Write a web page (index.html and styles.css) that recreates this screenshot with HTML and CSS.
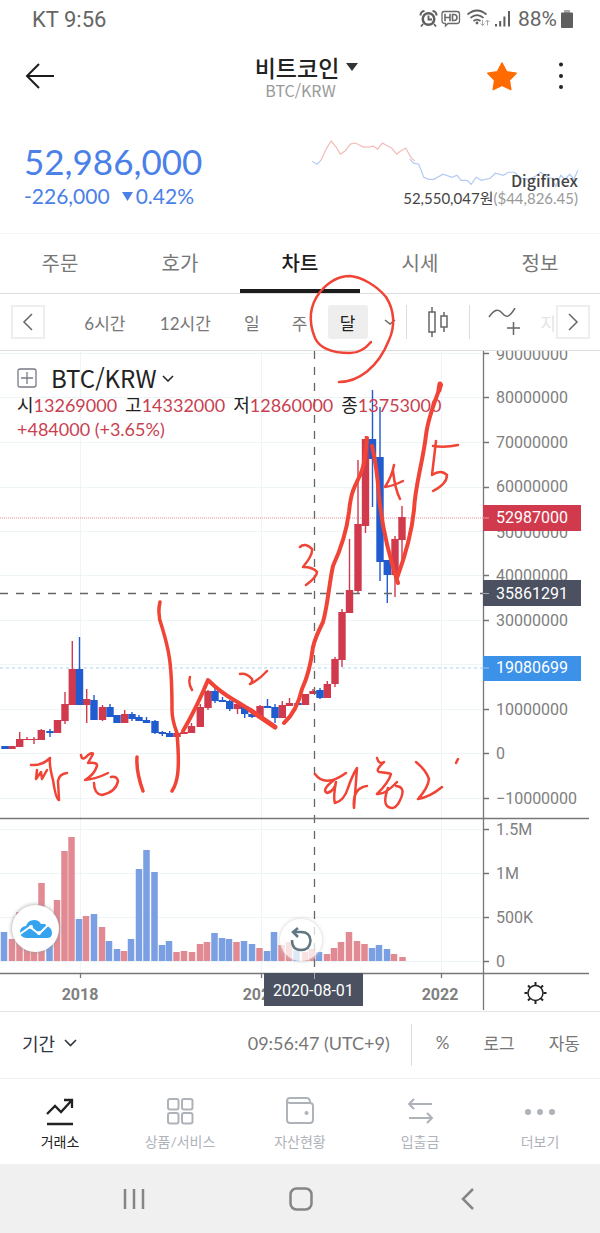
FILE: index.html
```html
<!DOCTYPE html>
<html lang="ko">
<head>
<meta charset="utf-8">
<meta name="viewport" content="width=device-width, initial-scale=1">
<title>비트코인 BTC/KRW</title>
<link rel="stylesheet" href="styles.css">
</head>
<body>
<div class="statusbar">
  <span>KT 9:56</span>
  <div class="status-icons">
    <svg width="96" height="22" viewBox="416 7 96 22" aria-hidden="true">
      <circle cx="426.500" cy="18" r="7" fill="#5f5f5f"/><circle cx="426.500" cy="18" r="4.500" fill="#fff"/>
      <path d="M426.500 14.500V18.500H430M421 23l-2 2.500M432 23l2 2.500" fill="none" stroke="#5f5f5f" stroke-width="1.800"/>
      <path d="M418.500 14.500q0-4 4-4.500M434.500 14.500q0-4-4-4.500" fill="none" stroke="#5f5f5f" stroke-width="2"/>
      <path d="M442 10.500h13q2.500 0 2.500 2.500v7q0 2.500-2.500 2.500h-9l-2.500 2.500v-2.500q-3.500 0-3.500-2.500v-7q0-2.500 2-2.500z" fill="none" stroke="#6a6a6a" stroke-width="1.300"/>
      <path d="M443 12.800v7.400M448 12.800v7.400M443 16.500h5M450.500 13.500v6h1.500q3 0 3-3t-3-3z" fill="none" stroke="#6a6a6a" stroke-width="1.600"/>
      <path d="M465.500 13.500q9.500-8 19 0M468.500 16.800q6.500-5.500 13 0M471.500 20q3.500-2.800 7 0" fill="none" stroke="#5f5f5f" stroke-width="1.700"/>
      <circle cx="475" cy="22" r="1.400" fill="#5f5f5f"/>
      <path d="M480.500 19v5.500m-2-2l2 2 2-2M485.500 24.500V19m-2 2l2-2 2 2" fill="none" stroke="#a5a5a5"/>
      <path d="M494 23v2.500M498.200 20v5.500M502.400 15.500v10M507 10v15.500" fill="none" stroke="#5f5f5f" stroke-width="2"/>
    </svg>
    <span>88%</span>
    <svg width="12" height="18" viewBox="0 0 12 18" aria-hidden="true"><path d="M3 0h6v3H3z" fill="#aaa"/><rect y="2.500" width="12" height="15.500" rx="1" fill="#5f5f5f"/></svg>
  </div>
</div>

<header class="header">
  <button class="icon-btn" aria-label="뒤로"><svg width="32" height="28" viewBox="0 0 32 28"><path d="M30 14H3M15 2L3 14l12 12" class="line dark"/></svg></button>
  <div class="title">
    <button class="pair">비트코인<svg width="12" height="8" viewBox="0 0 12 8"><path d="M0 0h12L6 8z" fill="#333"/></svg></button>
    <span class="pair-code">BTC/KRW</span>
  </div>
  <div class="actions">
    <button class="icon-btn" aria-label="즐겨찾기"><svg width="32" height="30" viewBox="0 0 32 30"><path d="M16 2l4.500 8.700 9.700 1.500-6.900 7 1.500 9.300L16 24.300l-8.800 4.200 1.500-9.300-6.900-7 9.700-1.500z" fill="#ff6b00" stroke="#ff6b00" stroke-width="1.500" stroke-linejoin="round"/></svg></button>
    <button class="icon-btn" aria-label="메뉴"><svg width="6" height="28" viewBox="0 0 6 28"><g fill="#222"><circle cx="3" cy="2.500" r="2"/><circle cx="3" cy="14" r="2"/><circle cx="3" cy="25" r="2"/></g></svg></button>
  </div>
</header>

<section class="summary">
  <div class="quote">
    <strong class="price">52,986,000</strong>
    <div class="change"><span>-226,000</span><span class="rate"><svg width="11" height="9" viewBox="0 0 11 9"><path d="M0 0h11L5.500 9z" fill="#4a80e8"/></svg>0.42%</span></div>
  </div>
  <div class="foreign">
    <svg class="spark" viewBox="315 139 264 50" aria-hidden="true">
      <path d="M324 160l5-11 5-8 5 6 4 7 5-3 5-7 5-1 4 2 4 2h5l5-1 4 3 5-6 5 3 4 2 5 6 4-3 5-3 5 9 4 4" fill="none" stroke="#f3bcb8" stroke-width="1.200"/>
      <path d="M315 161l5 3 4-4M412 159l4 4 5 1 5 13 5 2h5l9-5 9 3 5-2 4 5h6l4 4 5-7 5 3 9-2 5-5 8 2 5-3h6l6 6 8 1 7-3 5-4 7 5 4 1 4 8 5-11 4 4 5-5 4 5 4-9" fill="none" stroke="#b3cbf2" stroke-width="1.200"/>
    </svg>
    <span class="exchange">Digifinex</span>
    <span class="foreign-price">52,550,047원<small>($44,826.45)</small></span>
  </div>
</section>

<nav class="tabs">
  <a href="#order">주문</a><a href="#book">호가</a><a href="#chart" class="active" aria-current="page">차트</a><a href="#quotes">시세</a><a href="#info">정보</a>
</nav>

<div class="toolbar">
  <button class="scroll" aria-label="이전"><svg width="12" height="18" viewBox="0 0 12 18"><path d="M10 1L2 9l8 8" class="line"/></svg></button>
  <span></span>
  <button>6시간</button><button>12시간</button><button>일</button><button>주</button><button class="selected">달</button>
  <button aria-label="더 많은 간격"><svg width="12" height="6" viewBox="0 0 12 6"><path d="M1 1l5 4 5-4" class="line"/></svg></button>
  <i class="rule"></i>
  <button aria-label="캔들"><svg width="20" height="32" viewBox="0 0 20 32"><path d="M1 6h6v20H1zM4 1v5M4 26v5M13 10h6v11h-6zM16 6v4M16 21v5" class="line"/></svg></button>
  <i class="rule"></i>
  <button aria-label="지표 추가"><svg width="34" height="28" viewBox="0 0 34 28"><path d="M1 9c5-7 9-9 13-4s7 5 13-5M19 20h13M25.500 14v13" class="line"/></svg></button>
  <button class="faded">지</button>
  <button class="scroll" aria-label="다음"><svg width="12" height="18" viewBox="0 0 12 18"><path d="M2 1l8 8-8 8" class="line"/></svg></button>
</div>

<section class="chart" id="chart">
  <svg class="plot" viewBox="0 351 600 660" role="img" aria-label="BTC/KRW 월봉 차트">
    <path class="grid" d="M0 353.500H483M0 397.500H483M0 442.500H483M0 487.500H483M0 531.500H483M0 575.500H483M0 620.500H483M0 664.500H483M0 709.500H483M0 753.500H483M0 798.500H483M0 829.500H483M0 873.500H483M0 917.500H483M0 961.500H483M80.500 351V973M261.500 351V973M441.500 351V973"/>
    <path d="M0 668H483" stroke="#a7d3f5" stroke-dasharray="3 3"/>
    <path d="M0 518H483" stroke="#e58d96" stroke-dasharray="1 1"/>

    <g class="volume">
      <path class="up" d="M12 961V939M19.500 961V912M27 961V925M34 961V920M41.500 961V883M57 961V900M64.500 961V851M71.500 961V837M86 961V916M102 961V927M124 961V951M176.500 961V952M184 961V951M192 961V952M200 961V944M207 961V942M236.500 961V942M259.500 961V948M281.500 961V945M289 961V942M305 961V952M312 961V949M327 961V954M334 961V948M341 961V942M349 961V932M357 961V941M364.500 961V944M394 961V954M402.500 961V957"/>
      <path class="down" d="M4 961V932M49.500 961V930M79 961V919M94 961V914M109 961V941M117 961V949M131 961V939M139 961V869M146.500 961V850M154.500 961V872M162 961V945M169 961V941M214.500 961V933M222 961V938M229 961V939M244 961V941M252 961V944M267 961V951M274 961V932M296.500 961V951M319 961V952M372 961V948M379 961V945M387 961V949"/>
    </g>
    <g class="wick">
      <path class="up" d="M19.700 732V747M27 737V740M34 737V744M41.300 729V740M65 692V724M72.300 641V705M86.700 689V723M102.500 705V721M124.700 710V723M191.500 723V733M200.300 704V727M208 690V710M237.500 703V714M260 705V718M282.300 701V718M289.500 698V706M313 689V694M327.300 681V698M335 657V687M342 609V667M349.500 539V613M358 460V593M365.500 436V533M395 536V597M402 506V560"/>
      <path class="down" d="M50 729V737M79.500 637V705M94 695V720M110 704V717M132 712V721M139 715V721M146.500 717V723M155 720V734M162.300 731V736M169.700 731V737M215 688V703M222.500 697V702M229.700 700V711M244.700 705V718M252 712V718M267.500 699V708M275 704V723M298 701V705M320 688V699M372.500 390V507M380 407V581M387.300 560V603"/>
    </g>
    <g class="body">
      <path class="up" d="M12 746V749M19.700 739V747M27 739V740M34 739V740M41.300 730V740M57.500 720V733M65 704V721M72.300 669V705M86.700 699V705M102.500 707V720M124.700 714V723M177 733V737M184 732V734M191.500 726V733M200.300 707V727M208 691V708M237.500 704V709M260 706V717M282.300 705V718M289.500 703V706M305.500 694V705M313 691V694M327.300 684V698M335 659V684M342 612V660M349.500 590V613M358 524V591M365.500 439V526M395 539V575M402 517V540"/>
      <path class="down" d="M5 746V749M50 731V733M79.500 669V705M94 700V720M110 707V717M117 715V723M132 714V719M139 717V721M146.500 720V723M155 721V733M162.300 732V734M169.700 733V737M215 691V701M222.500 700V702M229.700 701V709M244.700 706V714M252 714V717M267.500 706V708M275 707V718M298 703V705M320 690V698M372.500 439V459M380 457V562M387.300 560V575"/>
    </g>

    <path d="M0 593.500H483M314.500 351V973" fill="none" stroke="#666" stroke-width="1.300" stroke-dasharray="8 8"/>
    <path d="M483.500 351V1010M0 818.500H589M0 973.500H589M483 353.500h6M483 397.500h6M483 442.500h6M483 487.500h6M483 575.500h6M483 620.500h6M483 709.500h6M483 753.500h6M483 798.500h6M483 829.500h6M483 873.500h6M483 917.500h6M483 961.500h6M80.500 973v5M261.500 973v5M441.500 973v5" fill="none" stroke="#777" stroke-width="1.300"/>
    <g class="axis">
      <text x="496" y="360">90000000</text><text x="496" y="403">80000000</text><text x="496" y="448">70000000</text><text x="496" y="492">60000000</text><text x="496" y="538">50000000</text><text x="496" y="581">40000000</text><text x="496" y="626">30000000</text><text x="496" y="715">10000000</text><text x="496" y="759">0</text><text x="496" y="804">−10000000</text>
      <text x="496" y="835">1.5M</text><text x="496" y="879">1M</text><text x="496" y="923">500K</text><text x="496" y="967">0</text>
    </g>
    <g class="axis years"><text x="80" y="1000">2018</text><text x="261" y="1000">2020</text><text x="440" y="1000">2022</text></g>
    <path d="M483 505h98v26h-98z" fill="#d13a4d"/><path d="M483 580h98v26h-98z" fill="#4b5161"/><path d="M483 656h98v25h-98z" fill="#3c92e8"/><path d="M264 973h99v33h-99z" fill="#4b5161"/>
    <path d="M483 518h6M483 593.500h6M483 668h6M314.500 973v6" stroke="#fff" stroke-opacity=".5"/>
    <g class="axis tag"><text x="496" y="523">52987000</text><text x="496" y="599">35861291</text><text x="496" y="673">19080699</text><text x="273" y="996">2020-08-01</text></g>
    <g transform="translate(535.500 993)" fill="none" stroke="#222"><circle r="7.500" stroke-width="1.500"/><path d="M0-8v-3M0 8v3M-8 0h-3M8 0h3M-5.500-5.500l-2-2M5.500-5.500l2-2M-5.500 5.500l-2 2M5.500 5.500l2 2" stroke-width="2"/></g>
  </svg>

  <div class="legend">
    <div class="symbol"><svg width="20" height="20" viewBox="0 0 20 20"><path d="M3 1h14q2 0 2 2v14q0 2-2 2H3q-2 0-2-2V3q0-2 2-2zM10 4v12M4 10h12" fill="none" stroke="#777b86" stroke-width="1.300"/></svg><button>BTC/KRW<svg width="12" height="7" viewBox="0 0 12 7"><path d="M1 1q5 5 5 5l5-5" fill="none" stroke="#222" stroke-width="1.500"/></svg></button></div>
    <div class="ohlc"><span>시<b>13269000</b></span><span>고<b>14332000</b></span><span>저<b>12860000</b></span><span>종<b>13753000</b></span></div>
    <div class="delta">+484000 (+3.65%)</div>
  </div>

  <button class="float cloud" aria-label="트레이딩뷰"><svg width="34" height="20" viewBox="0 0 34 20"><path d="M7 19q-6-1-6-6t6-6q2-6 8-6 5 0 7 4h4l2 2q5 2 5 7 0 5-5 5z" fill="#36a3ee"/><path d="M1 15l10-7 9 7 9-9" fill="none" stroke="#fff" stroke-width="2"/><circle cx="12" cy="8" r="2" fill="#fff"/><circle cx="20" cy="14" r="2" fill="#fff"/></svg></button>
  <button class="float undo" aria-label="초기화"><svg width="24" height="28" viewBox="0 0 24 28"><path d="M3 14q0 10 9 10t9.500-9.500Q21 6 12 6H5M9 2L4 6l5 5" fill="none" stroke="#607681" stroke-width="2.500"/></svg></button>

  <svg class="drawing" viewBox="0 351 600 660" aria-hidden="true">
    <g stroke-width="2.500">
      <path d="M371 342Q362 353 350 353C334 353 320 349 315 338 308 321 310 305 320 292 330 280 341 276 350 276 362 277 377 286 386 297 395 311 395 327 389 340 378 368 358 382 339 382"/>
      <path d="M190 677q-2 7 2 13M240 674q7-1 12 5 1 3-2 5 9-4 17-13"/>
      <path d="M300 547q5-5 12 2 1 6-9 18 10 0 14 5 0 5-11 13M394 465q-2 11-9 22 8-1 18-6M393 471q2 18 7 28"/>
      <path d="M436 441l-4 34q9-6 15 0 0 9-14 16M433 446q12 2 25-1"/>
      <path d="M31 765q11 1 19-7M37 770l-1 9 5-7 1 7 5-9M50 758q-1 7 3 22 3 20 6 20l-1-19q1-7 9-8M81 755q1 7 7 0 5-3 5-1l-5 9q10-1 9 3-3 9-12 14 11-1 23-7M94 783q0 11 8 12 14-3 16-14-1-5-7-4"/>
      <path d="M315 774q10 14 31-1M334 780q-13 10-7 13 8-2 9-11-3 16-1 21 9-2 13-15 4-12 9-20l-3 40q-2-20 13-22M377 758q2 7 7 4-9 8-5 10 10 1 12 2-2 8-14 20 8 1 20-12M388 788q-5 14-1 18 6 5 11-2 10-17-2-18M416 762q10 8 13 17-1 9-11 20 12-2 24-12M458 759l-2 4"/>
    </g>
    <g stroke-width="4">
      <path d="M160 602q-3 13 2 25c7 23 10 36 10 83q0 10 5 23c3 36 1 49-5 58M137 757q-1 15 6 34" stroke-width="3.500"/>
      <path d="M183 731q14-24 25-51 12 12 26 20t41 27M284 723q13-12 18-34 8-17 11-42 2-9 10-25c5-18 6-38 10-56 6-13 13-30 16-54 3-32 12-30 15-50q2-12 3-24M372 446q5 21 7 50 4 42 19 87M397 578q14-38 17-68c1-25 9-48 12-75q2-17 15-50"/>
      <path d="M440 384l-1 6M250 710l25 17" stroke-width="5"/>
    </g>
  </svg>
</section>

<div class="rangebar">
  <button class="period">기간<svg width="13" height="8" viewBox="0 0 13 8"><path d="M1 1l5.500 5.500L12 1" fill="none" stroke="#303640" stroke-width="1.600"/></svg></button>
  <button class="clock">09:56:47 (UTC+9)</button>
  <i class="rule"></i>
  <div class="scales"><button>%</button><button>로그</button><button>자동</button></div>
</div>

<nav class="bottom">
  <a href="#exchange" class="active"><svg viewBox="0 0 30 30"><path d="M2 17l8-8 6 6L27 3M19 3h8v8M2 27h26" fill="none" stroke="currentColor" stroke-width="2.300"/></svg>거래소</a>
  <a href="#products"><svg viewBox="0 0 30 30"><g class="thin"><rect x="3" y="2" width="10.500" height="10.500" rx="2"/><rect x="17" y="2" width="10.500" height="10.500" rx="2"/><rect x="3" y="16" width="10.500" height="10.500" rx="2"/><rect x="17" y="16" width="10.500" height="10.500" rx="2"/></g></svg>상품/서비스</a>
  <a href="#assets"><svg viewBox="0 0 30 30"><path class="thin" d="M2 4q0-3 3-3h17q3 0 3 5M2 4q0 2 4 2h19q3 0 3 3v14q0 3-3 3H5q-3 0-3-3z"/><circle cx="21.500" cy="16" r="2" fill="currentColor"/></svg>자산현황</a>
  <a href="#transfer"><svg viewBox="0 0 30 30"><path class="thin" d="M27 7H4M9 2L4 7l5 5M4 21h23M22 16l5 5-5 5"/></svg>입출금</a>
  <a href="#more"><svg viewBox="0 0 30 30"><g fill="currentColor"><circle cx="3" cy="15" r="3"/><circle cx="15" cy="15" r="3"/><circle cx="27" cy="15" r="3"/></g></svg>더보기</a>
</nav>

<div class="system">
  <button aria-label="최근 앱"><svg width="24" height="24" viewBox="0 0 24 24"><path d="M3 2v20M12 2v20M21 2v20"/></svg></button>
  <button aria-label="홈"><svg width="24" height="24" viewBox="0 0 24 24"><rect x="1.500" y="1.500" width="21" height="21" rx="6"/></svg></button>
  <button aria-label="뒤로"><svg width="24" height="24" viewBox="0 0 24 24"><path d="M17 2L7 12l10 10"/></svg></button>
</div>
</body>
</html>
```

FILE: styles.css
```css
* { box-sizing: border-box; }
body { margin: 0; background: #fff; color: #222; font-family: Lato, "Noto Sans CJK KR", sans-serif; font-size: 18px; }
button { appearance: none; border: 0; background: none; padding: 0; margin: 0; font: inherit; color: inherit; }
a { color: inherit; text-decoration: none; }
svg { display: block; flex: none; }
.line { fill: none; stroke: #666; stroke-width: 1.5; }
.line.dark { stroke: #1c1c1c; stroke-width: 2; }

.statusbar { display: flex; justify-content: space-between; align-items: center; height: 38px; padding: 0 27px 0 32px; color: #666; font: 22px Roboto, sans-serif; }
.status-icons { display: flex; align-items: center; gap: 4px; }
.status-icons span { font-size: 21px; }

.header { display: grid; grid-template-columns: 1fr auto 1fr; align-items: center; height: 76px; padding: 0 36px 0 24px; }
.title { display: flex; flex-direction: column; align-items: center; padding-left: 13px; }
.pair { display: flex; align-items: center; gap: 7px; padding-left: 12px; font: 500 23px/28px "Noto Sans CJK KR", sans-serif; }
.pair-code { color: #999; font: 16px/18px "Noto Sans CJK KR", sans-serif; }
.actions { display: flex; justify-content: flex-end; align-items: center; gap: 40px; }

.summary { display: flex; justify-content: space-between; height: 120px; padding: 25px 22px 0 24px; border-bottom: 1px solid #f5f5f5; }
.quote { color: #4a80e8; }
.price { display: block; font-size: 35px; line-height: 44px; font-weight: 400; }
.change { display: flex; gap: 12px; font-size: 21px; line-height: 26px; }
.rate { display: flex; align-items: center; gap: 3px; }
.foreign { position: relative; display: flex; flex-direction: column; align-items: flex-end; width: 48%; padding-top: 32px; }
.spark { position: absolute; top: 0; left: 0; width: 100%; }
.exchange { position: relative; color: #444; font: 500 16px/18px "Noto Sans CJK KR", sans-serif; }
.foreign-price { color: #444; font-size: 15px; line-height: 18px; }
.foreign-price small { color: #999; font-size: 15px; }

.tabs { display: grid; grid-template-columns: repeat(5, 1fr); height: 60px; border-bottom: 1px solid #ddd; }
.tabs a { display: flex; align-items: center; justify-content: center; padding-bottom: 2px; color: #777; font-size: 20px; }
.tabs .active { color: #1c1c1c; font-weight: 500; border-bottom: 4px solid #1c1c1c; padding: 2px 0 0; }

.toolbar { display: grid; grid-template-columns: 34px 20fr 80fr 81fr 52fr 44fr 52fr 32fr 1px 63fr 1px 70fr 12fr 34px; align-items: center; height: 57px; padding: 0 10px 0 11px; border-bottom: 1px solid #ddd; color: #777; font-size: 17px; }
.toolbar button { display: flex; align-items: center; justify-content: center; height: 34px; white-space: nowrap; }
.toolbar .scroll { border: 2px solid #eee; }
.toolbar .selected { width: 40px; justify-self: center; background: #eee; border-radius: 3px; color: #222; }
.toolbar .faded { justify-content: flex-end; color: #e5e5e5; }
.rule { width: 1px; height: 34px; background: #ddd; }

.chart { position: relative; border-bottom: 1px solid #e5e5e5; }
.plot { width: 100%; }
.grid { stroke: #edf5f7; fill: none; }
.volume { stroke-width: 6.500; }
.volume .up { stroke: #e28a93; }
.volume .down { stroke: #7a9fe2; }
.wick { stroke-width: 1.400; }
.body { stroke-width: 7.400; }
.wick .up, .body .up { stroke: #d13a4d; }
.wick .down, .body .down { stroke: #205bd0; }
.axis { fill: #808080; font: 16px Roboto, sans-serif; }
.years { font-weight: 700; text-anchor: middle; }
.tag { fill: #fff; }

.legend { position: absolute; top: 12px; left: 17px; }
.symbol, .symbol button { display: flex; align-items: center; }
.symbol { gap: 14px; font: 24px/30px "Noto Sans CJK KR", sans-serif; }
.symbol button { gap: 5px; }
.ohlc { display: flex; gap: 8px; font-size: 18px; line-height: 24px; white-space: nowrap; }
.ohlc b { font-weight: 400; color: #c93f51; }
.delta { color: #c93f51; font-size: 18px; line-height: 25px; }
.float { position: absolute; display: flex; align-items: center; justify-content: center; border-radius: 50%; box-shadow: 0 0 4px #999; }
.cloud { left: 2%; top: 84%; width: 47px; height: 47px; background: #fff; }
.undo { left: 280px; top: 86%; width: 42px; height: 42px; background: rgba(255, 255, 255, .75); box-shadow: 0 0 4px #ccc; }
.drawing { position: absolute; top: 0; left: 0; width: 100%; overflow: visible; pointer-events: none; fill: none; stroke: #f04436; stroke-linecap: round; stroke-linejoin: round; }

.rangebar { display: flex; align-items: center; height: 67px; padding: 0 20px 0 22px; border-bottom: 1px solid #eee; color: #777; font-size: 18px; }
.rangebar button { padding-bottom: 5px; }
.period { display: flex; align-items: center; gap: 9px; margin-right: auto; color: #303640; }
.rangebar .rule { height: 42px; margin: 0 24px 0 21px; }
.scales { display: flex; gap: 34px; font-size: 17px; }

.bottom { display: grid; grid-template-columns: repeat(5, 1fr); height: 85px; }
.bottom a { display: flex; flex-direction: column; align-items: center; gap: 5px; padding-top: 18px; color: #aeb2b9; font-size: 14px; line-height: 20px; }
.bottom .active { color: #222; }
.bottom svg { width: 30px; height: 30px; }
.thin { fill: none; stroke: currentColor; stroke-width: 2; }

.system { display: grid; grid-template-columns: 1fr 1fr 1fr; height: 70px; padding: 0 48px 0 50px; background: #f0f0f0; }
.system button { display: flex; align-items: center; justify-content: center; }
.system svg { fill: none; stroke: #858585; stroke-width: 2.500; }
```
